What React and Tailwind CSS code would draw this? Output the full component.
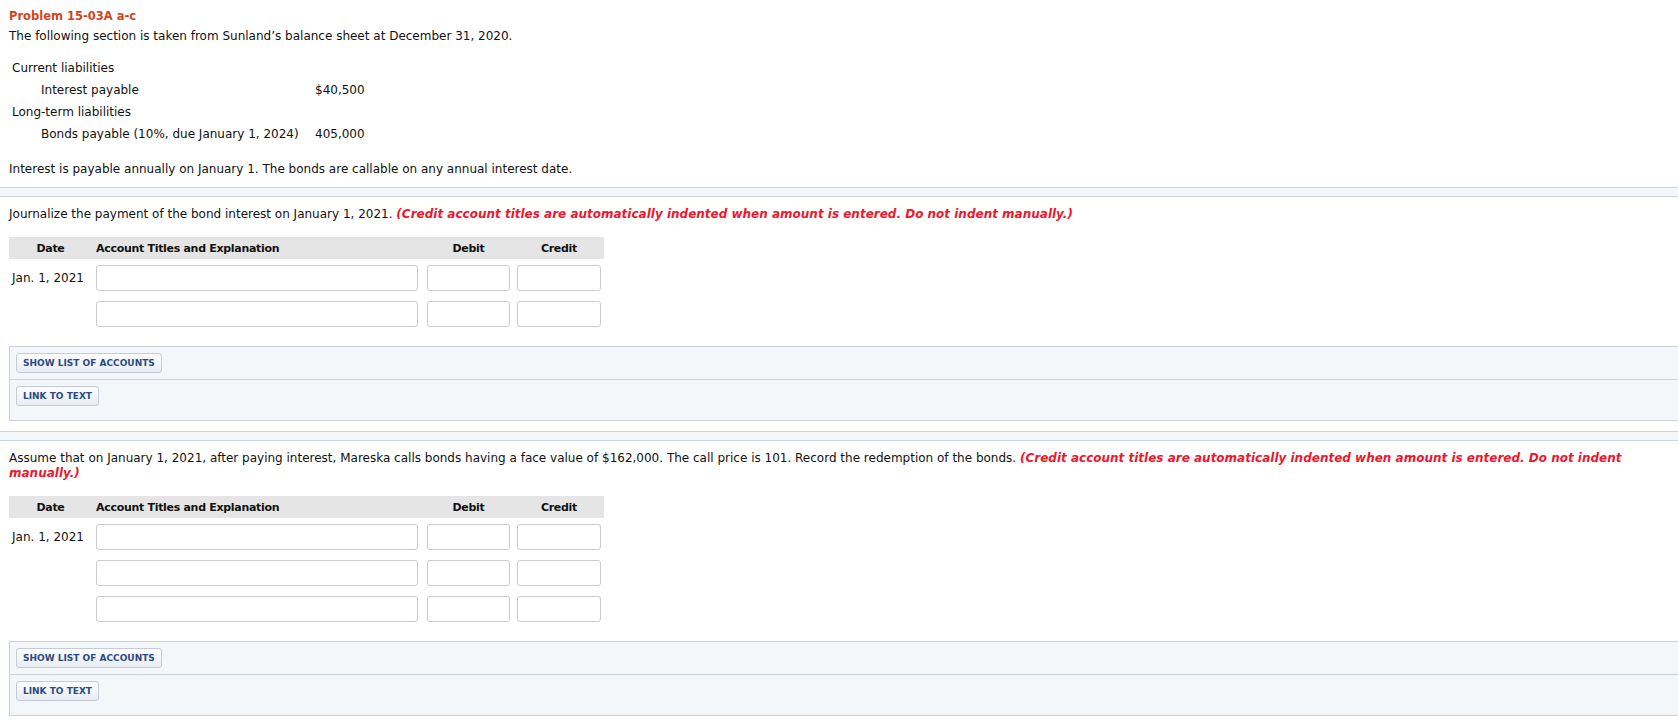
import React from 'react';

const liabilities = [
  { label: 'Current liabilities', indent: false, amount: '' },
  { label: 'Interest payable', indent: true, amount: '$40,500' },
  { label: 'Long-term liabilities', indent: false, amount: '' },
  { label: 'Bonds payable (10%, due January 1, 2024)', indent: true, amount: '405,000' },
];

const Divider = () => (
  <div className="mt-[10px] h-[10px] w-full border-y border-[#c9d2de] bg-[#f4f7fa]" />
);

const ToolButton = ({ children }) => (
  <button
    type="button"
    className="flex h-[20px] items-center rounded-[3px] border border-[#c3ccd8] bg-gradient-to-b from-[#fdfdfe] to-[#e8edf3] px-[6px] text-[9px] font-bold leading-none text-[#2b4b84]"
  >
    {children}
  </button>
);

const JournalTable = ({ rows }) => (
  <div className="mt-[15px] w-[595px]">
    <div className="flex h-[22px] items-center bg-[#e5e5e5] text-[11px] font-bold tracking-[-0.3px]">
      <div className="w-[83px] text-center">Date</div>
      <div className="ml-[4px] w-[322px]">Account Titles and Explanation</div>
      <div className="ml-[9px] w-[83px] text-center">Debit</div>
      <div className="ml-[7px] w-[84px] text-center">Credit</div>
    </div>
    <div className="flex flex-col gap-[10px] pt-[6px]">
      {Array.from({ length: rows }).map((_, i) => (
        <div key={i} className="flex items-center">
          <div className="w-[87px] pl-[3px]">{i === 0 ? 'Jan. 1, 2021' : ''}</div>
          <input className="h-[26px] w-[322px] rounded-[3px] border border-[#cbcbcb] bg-white" />
          <input className="ml-[9px] h-[26px] w-[83px] rounded-[3px] border border-[#cbcbcb] bg-white" />
          <input className="ml-[7px] h-[26px] w-[84px] rounded-[3px] border border-[#cbcbcb] bg-white" />
        </div>
      ))}
    </div>
  </div>
);

const ToolsPanel = () => (
  <div className="ml-[9px] mt-[19px] border-y border-l border-[#c9d2de] bg-[#f4f7fa]">
    <div className="border-b border-[#c9d2de] px-[6px] pb-[6px] pt-[6px]">
      <ToolButton>SHOW LIST OF ACCOUNTS</ToolButton>
    </div>
    <div className="px-[6px] pb-[14px] pt-[6px]">
      <ToolButton>LINK TO TEXT</ToolButton>
    </div>
  </div>
);

const Note = () => (
  <span className="font-bold italic text-[#f0162c]">
    (Credit account titles are automatically indented when amount is entered. Do not indent manually.)
  </span>
);

const App = () => {
  return (
    <div className="min-h-screen w-full overflow-hidden bg-white font-['DejaVu_Sans','Verdana',sans-serif] text-[12px] leading-[15px] text-[#111]">
      <div className="pl-[9px] pt-[9px]">
        <h1 className="text-[11.5px] font-bold text-[#d0461c]">Problem 15-03A a-c</h1>
        <p className="mt-[5px]">The following section is taken from Sunland’s balance sheet at December 31, 2020.</p>

        <div className="mt-[13px] pl-[3px]">
          {liabilities.map((row) => (
            <div key={row.label} className="flex h-[22px] items-center">
              <div className={row.indent ? 'w-[303px] pl-[29px]' : 'w-[303px]'}>{row.label}</div>
              <div>{row.amount}</div>
            </div>
          ))}
        </div>

        <p className="mt-[17px]">Interest is payable annually on January 1. The bonds are callable on any annual interest date.</p>
      </div>

      <Divider />

      <div className="pl-[9px]">
        <p className="mt-[10px]">
          Journalize the payment of the bond interest on January 1, 2021. <Note />
        </p>
        <JournalTable rows={2} />
      </div>
      <ToolsPanel />

      <Divider />

      <div className="pl-[9px] pr-[40px]">
        <p className="mt-[10px]">
          Assume that on January 1, 2021, after paying interest, Mareska calls bonds having a face value of $162,000. The call price is 101. Record the redemption of the bonds. <Note />
        </p>
        <JournalTable rows={3} />
      </div>
      <ToolsPanel />
    </div>
  );
};

export default App;
